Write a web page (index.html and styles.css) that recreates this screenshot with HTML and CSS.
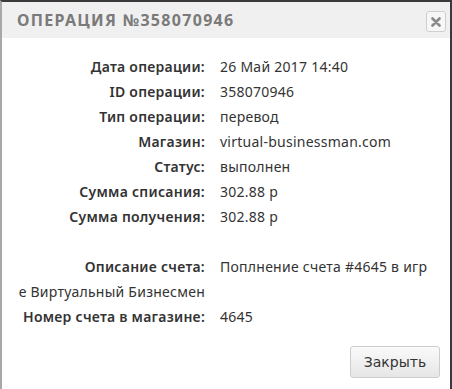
FILE: index.html
```html
<!DOCTYPE html>
<html lang="ru">
  <head>
    <meta charset="UTF-8" />
    <meta name="viewport" content="width=device-width, initial-scale=1.0" />
    <title>Операция №358070946</title>
    <link rel="stylesheet" href="styles.css">
  </head>
  <body>
    <div class="modal">
      <div class="modal-header">
        <h1 class="modal-title">Операция №358070946</h1>
        <button class="modal-close" type="button">
          <svg width="10" height="10" viewBox="0 0 10 10">
            <path d="M1.5 1.5 L8.5 8.5 M8.5 1.5 L1.5 8.5" stroke="#8a8a8a" stroke-width="2.6" stroke-linecap="round" />
          </svg>
        </button>
      </div>
      <div class="modal-body">
        <div class="row"><span class="label">Дата операции:</span><span class="value">26 Май 2017 14:40</span></div>
        <div class="row"><span class="label">ID операции:</span><span class="value">358070946</span></div>
        <div class="row"><span class="label">Тип операции:</span><span class="value">перевод</span></div>
        <div class="row"><span class="label">Магазин:</span><span class="value">virtual-businessman.com</span></div>
        <div class="row"><span class="label">Статус:</span><span class="value">выполнен</span></div>
        <div class="row"><span class="label">Сумма списания:</span><span class="value">302.88 р</span></div>
        <div class="row"><span class="label">Сумма получения:</span><span class="value">302.88 р</span></div>
        <div class="row row_empty"></div>
        <div class="row"><span class="label">Описание счета:</span><span class="value">Поплнение счета #4645 в игр</span></div>
        <div class="row"><span class="label label_plain">е Виртуальный Бизнесмен</span><span class="value"></span></div>
        <div class="row"><span class="label">Номер счета в магазине:</span><span class="value">4645</span></div>
      </div>
      <div class="modal-footer">
        <button class="btn" type="button">Закрыть</button>
      </div>
    </div>
  </body>
</html>
```

FILE: styles.css
```css
html,
body {
  margin: 0;
  padding: 0;
  background: #fff;
}

.modal {
  box-sizing: border-box;
  width: 452px;
  height: 389px;
  border-top: 2px solid #3a3a3a;
  border-left: 2px solid #a8a8a8;
  border-right: 2px solid #3a3a3a;
  background: #fff;
  display: flex;
  flex-direction: column;
  font-family: "Noto Sans", "Open Sans", sans-serif;
  color: #333;
}

.modal-header {
  height: 36px;
  background: #f0f0f0;
  display: flex;
  align-items: center;
  justify-content: space-between;
  padding: 0 4px 0 15px;
}

.modal-title {
  margin: 0;
  font-size: 16px;
  font-weight: 700;
  letter-spacing: 1.3px;
  text-transform: uppercase;
  color: #7a7a7a;
}

.modal-close {
  width: 20px;
  height: 21px;
  padding: 0;
  border: 1px solid #cfcfcf;
  border-radius: 3px;
  background: #f7f7f7;
  display: flex;
  align-items: center;
  justify-content: center;
  margin-top: 3px;
}

.modal-body {
  padding-top: 16px;
  font-size: 14px;
  letter-spacing: 0.25px;
}

.row {
  display: flex;
  height: 25px;
  line-height: 25px;
}

.label {
  width: 203px;
  text-align: right;
  font-weight: 600;
  white-space: nowrap;
}

.label_plain {
  font-weight: 400;
}

.value {
  padding-left: 15px;
  white-space: nowrap;
}

.modal-footer {
  display: flex;
  justify-content: flex-end;
  padding: 17px 10px 0 0;
}

.btn {
  width: 90px;
  height: 32px;
  font-family: "DejaVu Sans", sans-serif;
  font-size: 14px;
  color: #333;
  border: 1px solid #cdcdcd;
  border-radius: 3px;
  background: linear-gradient(#fafafa, #e6e6e6);
}
```
